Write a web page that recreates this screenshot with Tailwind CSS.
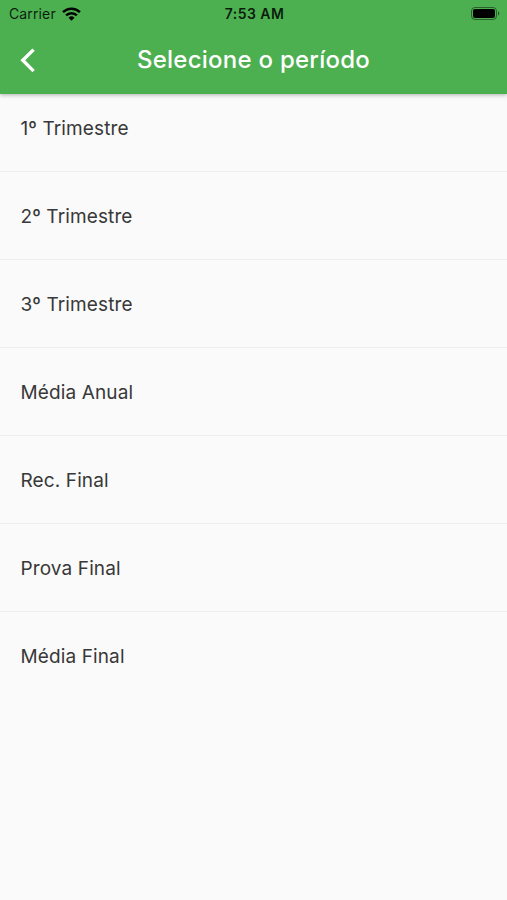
<!DOCTYPE html>
<html lang="pt-BR">
<head>
    <meta charset="UTF-8">
    <meta name="viewport" content="width=device-width, initial-scale=1.0">
    <title>Selecione o período</title>
    <script src="https://cdn.jsdelivr.net/npm/@tailwindcss/browser@4"></script>
</head>
<body class="h-screen overflow-hidden bg-[#fafafa] font-[Inter,sans-serif]">
    <header class="relative h-[94px] bg-[#4caf50] shadow-[0_1px_4px_rgba(0,0,0,0.3)]">
        <!-- Status bar -->
        <div class="grid h-[27px] grid-cols-3 items-center pl-[9px] pr-[7px] text-black">
            <div class="flex items-center gap-[6px]">
                <span class="text-[14px] tracking-[0.13px] text-black/85">Carrier</span>
                <svg class="h-[14px] w-[19px]" viewBox="0 0 18 13" fill="none" stroke="currentColor" stroke-width="2.4">
                    <path d="M1 4.8a11.4 11.4 0 0 1 16 0M3.9 7.9a7.2 7.2 0 0 1 10.2 0" />
                    <path d="M9 13 6.2 10.1a4 4 0 0 1 5.6 0z" fill="currentColor" stroke="none" />
                </svg>
            </div>
            <div class="text-center text-[14px] font-semibold tracking-[0.45px] text-black/85">7:53 AM</div>
            <svg class="h-[13px] w-[29px] justify-self-end" viewBox="0 0 29 13">
                <rect x="0.5" y="0.5" width="25" height="12" rx="3.5" fill="none" stroke="#000" stroke-opacity="0.45" />
                <rect x="2" y="2" width="22" height="9" rx="2" />
                <path d="M27 4.3v4.4c1.8-.8 1.8-3.6 0-4.4z" fill-opacity="0.5" />
            </svg>
        </div>
        <!-- Title bar -->
        <div class="grid h-[66px] grid-cols-[60px_1fr_60px] items-center text-white">
            <svg class="ml-[20px] h-[25px] w-[16px]" viewBox="0 0 16 25" fill="none" stroke="currentColor" stroke-width="3.4">
                <path d="M13.6 1.6 2.8 12.3l10.8 10.8" />
            </svg>
            <h1 class="text-center text-[24px] font-medium tracking-[0.25px]">Selecione o período</h1>
        </div>
    </header>

    <ul class="-mt-[10px] text-[19px] tracking-[0.12px] text-[#383838]">
        <li class="flex h-[88px] items-center border-b border-[#ededed] pt-[3px] pl-[20.5px]">1º Trimestre</li>
        <li class="flex h-[88px] items-center border-b border-[#ededed] pt-[3px] pl-[20.5px]">2º Trimestre</li>
        <li class="flex h-[88px] items-center border-b border-[#ededed] pt-[3px] pl-[20.5px]">3º Trimestre</li>
        <li class="flex h-[88px] items-center border-b border-[#ededed] pt-[3px] pl-[20.5px]">Média Anual</li>
        <li class="flex h-[88px] items-center border-b border-[#ededed] pt-[3px] pl-[20.5px]">Rec. Final</li>
        <li class="flex h-[88px] items-center border-b border-[#ededed] pt-[3px] pl-[20.5px]">Prova Final</li>
        <li class="flex h-[88px] items-center border-b border-transparent pt-[3px] pl-[20.5px]">Média Final</li>
    </ul>
</body>
</html>
